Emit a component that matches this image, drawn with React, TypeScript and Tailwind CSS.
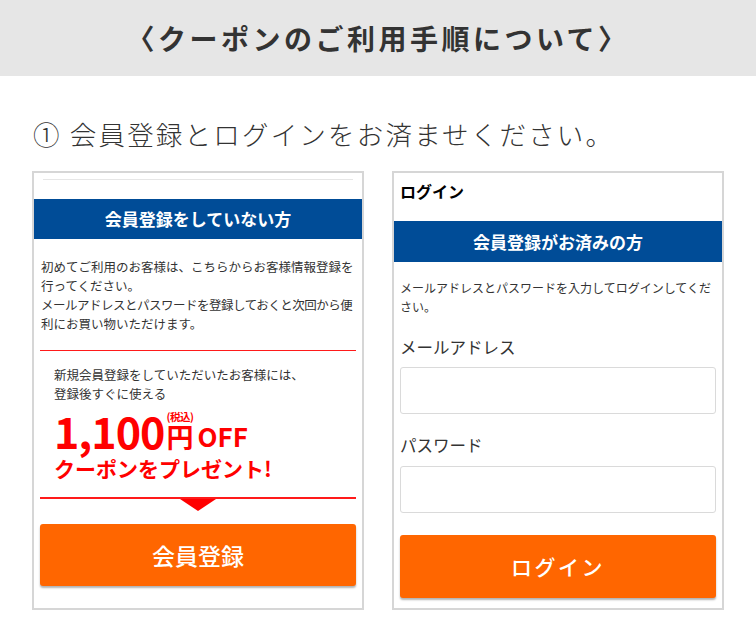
const font = "font-['Noto_Sans_CJK_JP','Noto_Sans',sans-serif]"

const LeftCard = () => (
  <div className="w-[332px] h-[439px] border-2 border-[#d6d6d6] bg-white flex flex-col">
    <div className="shrink-0 mt-[6px] mx-[9px] h-px bg-[#e6e6e6]" />
    <div className="shrink-0 mt-[19px] h-[40px] bg-[#004c97] flex items-center justify-center text-white text-[17px] font-bold">
      会員登録をしていない方
    </div>
    <div className="mt-[18px] px-[7px] text-[12.5px] leading-[19px] text-[#333] whitespace-nowrap">
      <p>初めてご利用のお客様は、こちらからお客様情報登録を</p>
      <p>行ってください。</p>
      <p className="tracking-[-0.5px]">メールアドレスとパスワードを登録しておくと次回から便</p>
      <p>利にお買い物いただけます。</p>
    </div>
    <div className="shrink-0 mx-[6px] mt-[17px] px-[14px] pt-[14px] pb-[14px] border-t border-b-2 border-[#ff1a1a]">
      <p className="text-[12.5px] leading-[19px] text-[#333]">
        新規会員登録をしていただいたお客様には、
        <br />
        登録後すぐに使える
      </p>
      <div className="mt-[6px] flex items-end text-[#ff0000] font-bold h-[42px]">
        <span className="text-[43px] leading-[42px] tracking-[-1px]">1,100</span>
        <span className="ml-[2px] flex flex-col items-center">
          <span className="text-[10.5px] leading-[12px] tracking-[-0.5px]">(税込)</span>
          <span className="text-[27px] leading-[28px]">円</span>
        </span>
        <span className="ml-[4px] text-[26px] leading-[30px]">OFF</span>
      </div>
      <p className="mt-[2px] text-[21px] leading-[30px] font-bold text-[#ff0000]">クーポンをプレゼント!</p>
    </div>
    <div className="shrink-0 flex justify-center">
      <div className="w-0 h-0 border-l-[18px] border-r-[18px] border-t-[12px] border-l-transparent border-r-transparent border-t-[#ff0000]" />
    </div>
    <button className="shrink-0 mx-[6px] mt-[13px] h-[62px] rounded-[3px] bg-[#ff6600] text-white text-[23px] font-medium shadow-[0_2px_2px_rgba(0,0,0,0.3)]">
      会員登録
    </button>
  </div>
)

const RightCard = () => (
  <div className="w-[332px] h-[439px] border-2 border-[#d6d6d6] bg-white flex flex-col">
    <h3 className="mt-[6px] px-[6px] text-[16px] leading-[24px] font-bold text-black">ログイン</h3>
    <div className="mt-[18px] h-[41px] bg-[#004c97] flex items-center justify-center text-white text-[17px] font-bold">
      会員登録がお済みの方
    </div>
    <p className="mt-[16px] px-[6px] text-[12px] leading-[19px] text-[#333]">
      メールアドレスとパスワードを入力してログインしてください。
    </p>
    <div className="px-[6px] flex flex-col">
      <label className="mt-[17px] text-[16.5px] leading-[28px] text-[#333]">メールアドレス</label>
      <input className="mt-[6px] h-[47px] rounded-[3px] border border-[#dadada] bg-white" />
      <label className="mt-[17px] text-[16.5px] leading-[28px] text-[#333]">パスワード</label>
      <input className="mt-[7px] h-[47px] rounded-[3px] border border-[#dadada] bg-white" />
      <button className="mt-[22px] h-[63px] rounded-[3px] bg-[#ff6600] text-white text-[21px] font-medium tracking-[0.12em] shadow-[0_2px_2px_rgba(0,0,0,0.3)]">
        ログイン
      </button>
    </div>
  </div>
)

export default function App() {
  return (
    <div className={`${font} w-[756px] h-[641px] bg-white overflow-hidden`}>
      <div className="h-[76px] bg-[#e6e6e6] flex items-center justify-center">
        <h1 className="text-[28px] font-bold text-[#333] tracking-[3.5px]">〈クーポンのご利用手順について〉</h1>
      </div>
      <p className="mt-[38px] pl-[33px] text-[26.5px] leading-[40px] font-light text-[#333] tracking-[2.2px]">
        ① 会員登録とログインをお済ませください。
      </p>
      <div className="mt-[17px] pl-[32px] flex gap-[28px]">
        <LeftCard />
        <RightCard />
      </div>
    </div>
  )
}
